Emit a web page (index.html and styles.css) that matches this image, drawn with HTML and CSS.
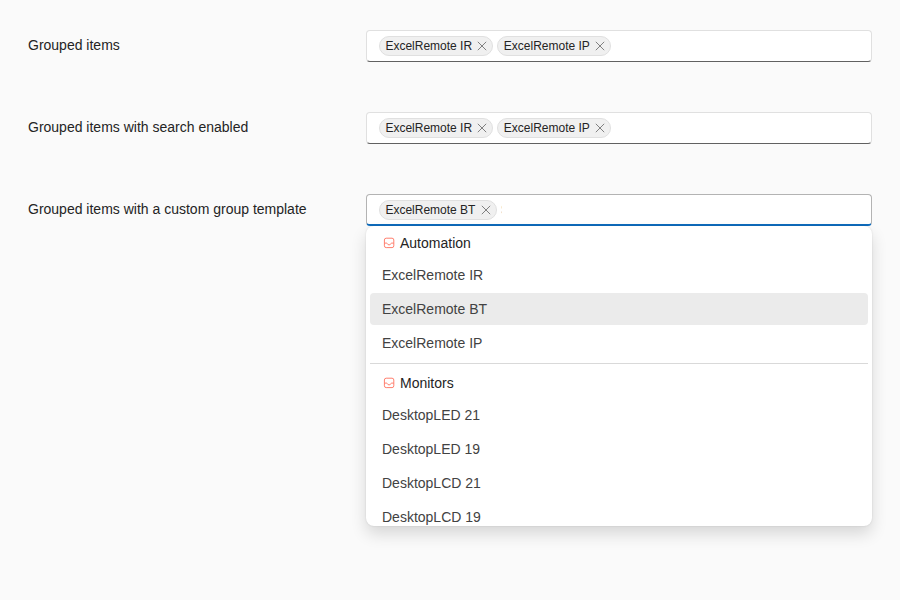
FILE: index.html
```html
<!DOCTYPE html>
<html lang="en">
<head>
<meta charset="utf-8">
<title>Grouped items</title>
<link rel="stylesheet" href="styles.css">
</head>
<body>
<svg class="defs" aria-hidden="true">
  <symbol id="close" viewBox="0 0 10 10"><path d="M.8.8 9.2 9.2M9.2.8.8 9.2"/></symbol>
  <symbol id="box" viewBox="0 0 12 12"><rect x="1.4" y="1.2" width="9.4" height="9.4" rx="1.8"/><path d="M1.4 6.1h2.3c.3 0 .5.2.6.5.3.9.9 1.3 1.8 1.3s1.5-.4 1.8-1.3c.1-.3.3-.5.6-.5h2.3"/></symbol>
</svg>
<main class="fieldset">
  <div class="field">
    <div class="label">Grouped items</div>
    <div class="editor">
      <div class="tagbox">
        <span class="tag">ExcelRemote IR<svg class="close"><use href="#close"/></svg></span>
        <span class="tag">ExcelRemote IP<svg class="close"><use href="#close"/></svg></span>
      </div>
    </div>
  </div>
  <div class="field">
    <div class="label">Grouped items with search enabled</div>
    <div class="editor">
      <div class="tagbox">
        <span class="tag">ExcelRemote IR<svg class="close"><use href="#close"/></svg></span>
        <span class="tag">ExcelRemote IP<svg class="close"><use href="#close"/></svg></span>
      </div>
    </div>
  </div>
  <div class="field">
    <div class="label">Grouped items with a custom group template</div>
    <div class="editor">
      <div class="tagbox focused">
        <span class="tag">ExcelRemote BT<svg class="close"><use href="#close"/></svg></span>
        <span class="search">S</span>
      </div>
      <div class="popup">
        <div class="group">
          <div class="group-header"><svg class="box"><use href="#box"/></svg>Automation</div>
          <div class="item">ExcelRemote IR</div>
          <div class="item selected">ExcelRemote BT</div>
          <div class="item">ExcelRemote IP</div>
        </div>
        <div class="group">
          <div class="group-header"><svg class="box"><use href="#box"/></svg>Monitors</div>
          <div class="item">DesktopLED 21</div>
          <div class="item">DesktopLED 19</div>
          <div class="item">DesktopLCD 21</div>
          <div class="item">DesktopLCD 19</div>
        </div>
      </div>
    </div>
  </div>
</main>
</body>
</html>
```
FILE: styles.css
```css
* { box-sizing: border-box; }

body {
  margin: 0;
  height: 600px;
  overflow: hidden;
  background: #fafafa;
  color: #242424;
  font: 14px/20px "Liberation Sans", Arial, sans-serif;
}

.defs { display: none; }

.fieldset {
  display: flex;
  flex-direction: column;
  gap: 50px;
  padding: 30px 28px;
}

.field {
  display: grid;
  grid-template-columns: 338px 506px;
  height: 32px;
}

.label { padding-top: 5px; }

.editor { position: relative; }

.tagbox {
  display: flex;
  align-items: center;
  gap: 4px;
  height: 32px;
  padding: 0 12px;
  background: #fff;
  border: 1px solid #e0e0e0;
  border-bottom-color: #616161;
  border-radius: 4px;
}

.tagbox.focused {
  border-color: #b3b3b3;
  border-bottom: 2px solid #0f6cbd;
  padding-top: 1px;
}

.tag {
  display: flex;
  align-items: center;
  height: 20px;
  padding: 0 5px 0 5.4px;
  background: #f0f0f0;
  border: 1px solid #e0e0e0;
  border-radius: 10px;
  font-size: 12px;
  line-height: 18px;
  white-space: nowrap;
}

.close {
  width: 10px;
  height: 10px;
  margin-left: 5.3px;
  fill: none;
  stroke: #808080;
  stroke-width: 1;
}

.search {
  width: 1px;
  overflow: hidden;
  color: #bdbdbd;
  font-size: 12px;
}

.popup {
  position: absolute;
  top: 32px;
  left: 0;
  width: 506px;
  height: 300px;
  padding: 1px 4px;
  overflow: hidden;
  background: #fff;
  border-radius: 8px;
  box-shadow: 0 0 2px rgba(0, 0, 0, .12), 0 8px 16px rgba(0, 0, 0, .14);
}

.group + .group {
  margin-top: 4px;
  padding-top: 3px;
  border-top: 1px solid #d9d9d9;
}

.group-header {
  display: flex;
  align-items: center;
  height: 32px;
  padding-left: 13px;
}

.box {
  width: 12px;
  height: 12px;
  margin-right: 5px;
  fill: none;
  stroke: #ff7f6e;
  stroke-width: 1;
}

.item {
  height: 32px;
  padding: 6px 12px;
  border-radius: 4px;
  color: #424242;
}

.item + .item { margin-top: 2px; }

.selected { background: #ebebeb; }
```
